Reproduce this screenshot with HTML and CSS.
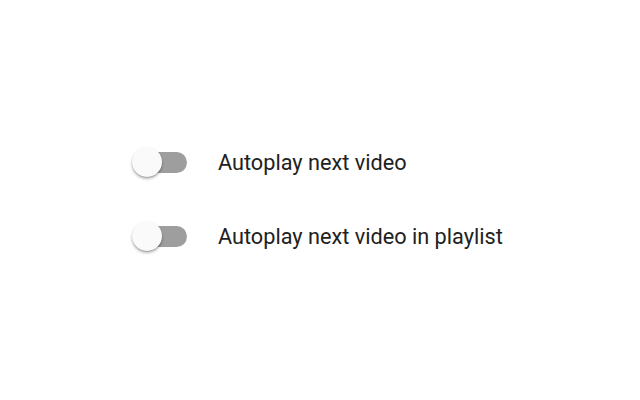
FILE: index.html
```html
<!DOCTYPE html>
<html>
<head>
<meta charset="utf-8">
<link rel="stylesheet" href="styles.css">
</head>
<body>
<div class="list">
  <div class="row">
    <div class="toggle"><div class="track"></div><div class="thumb"></div></div>
    <span class="label">Autoplay next video</span>
  </div>
  <div class="row">
    <div class="toggle"><div class="track"></div><div class="thumb"></div></div>
    <span class="label">Autoplay next video in playlist</span>
  </div>
</div>
</body>
</html>
```
FILE: styles.css
```css
html, body { margin: 0; padding: 0; background: #fff; }
body { width: 640px; height: 400px; font-family: Roboto, "Liberation Sans", sans-serif; }
.list {
  display: flex;
  flex-direction: column;
  gap: 44px;
  padding: 147px 0 0 132px;
}
.row {
  display: flex;
  align-items: center;
  height: 30px;
}
.toggle {
  position: relative;
  width: 56px;
  height: 30px;
  margin-right: 30px;
  flex: none;
}
.track {
  position: absolute;
  left: 1px;
  top: 5px;
  width: 54px;
  height: 21px;
  border-radius: 11px;
  background: #9e9e9e;
}
.thumb {
  position: absolute;
  left: 0;
  top: 0;
  width: 30px;
  height: 30px;
  border-radius: 50%;
  background: #fafafa;
  box-shadow: 0 2px 3px rgba(0,0,0,0.28), 0 1px 1px rgba(0,0,0,0.14);
}
.label {
  font-size: 21.7px;
  color: #212121;
  line-height: 28px;
  padding-top: 2px;
}
```
